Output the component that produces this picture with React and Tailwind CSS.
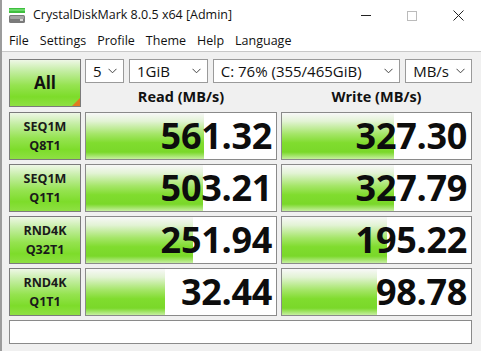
import React from 'react';

const FONT = { fontFamily: '"Open Sans", "Noto Sans", "Liberation Sans", sans-serif' };

const rows = [
  { l1: 'SEQ1M', l2: 'Q8T1', read: '561.32', rw: 118, write: '327.30', ww: 112 },
  { l1: 'SEQ1M', l2: 'Q1T1', read: '503.21', rw: 117, write: '327.79', ww: 112 },
  { l1: 'RND4K', l2: 'Q32T1', read: '251.94', rw: 107, write: '195.22', ww: 105 },
  { l1: 'RND4K', l2: 'Q1T1', read: '32.44', rw: 79, write: '98.78', ww: 95 },
];

const greenBtn =
  'bg-[linear-gradient(to_bottom,#eef7e6_0%,#c2eda0_25%,#95e350_55%,#7ddc2a_80%,#8ee043_100%)] border border-[#7b7b7b]';

const barFill =
  'bg-[linear-gradient(to_bottom,#f8f8f8_0%,#e2f3d4_18%,#a6e66a_45%,#80dc2e_65%,#7ad82a_85%,#c6efa0_100%)]';

const Chevron = () => (
  <svg width="9" height="6" viewBox="0 0 9 6" className="shrink-0">
    <path d="M0.5 0.8 L4.5 4.8 L8.5 0.8" fill="none" stroke="#444" strokeWidth="1" />
  </svg>
);

const Select = ({ value, className }) => (
  <div className={`h-[24px] bg-white border border-[#9a9a9a] flex items-center justify-between pl-[7px] pr-[6px] text-[15px] text-[#111] ${className}`}>
    <span className="leading-none">{value}</span>
    <Chevron />
  </div>
);

const ValueCell = ({ value, fill }) => (
  <div className="relative h-[48px] bg-white border border-[#8a8a8a] overflow-hidden">
    <div className={`absolute left-0 top-0 bottom-0 ${barFill}`} style={{ width: fill }} />
    <div className="relative h-full flex items-center justify-end pr-[4px] text-[36px] font-bold text-[#0d0d0d] tracking-[-0.3px] leading-none">
      {value}
    </div>
  </div>
);

export default function App() {
  return (
    <div className="w-[481px] h-[351px] bg-[#f0f0f0] overflow-hidden border-l-2 border-[#9c9c9c] relative" style={FONT}>
      {/* title bar */}
      <div className="h-[31px] bg-white flex items-center">
        <svg width="17" height="16" viewBox="0 0 17 16" className="ml-[7px] mr-[7px]">
          <rect x="0" y="0" width="16" height="5" fill="#3fbf3f" />
          <rect x="0" y="1" width="16" height="2" fill="#6ad86a" />
          <rect x="0" y="7" width="16" height="8" rx="1.5" fill="#7a7a7a" />
          <rect x="1" y="8" width="14" height="3" rx="1" fill="#a4a4a4" />
          <rect x="11" y="11" width="3" height="2" fill="#d8d8d8" />
        </svg>
        <span className="text-[12.5px] text-[#111]">CrystalDiskMark 8.0.5 x64 [Admin]</span>
        <div className="ml-auto flex items-center h-full">
          <div className="w-[46px] flex justify-center">
            <div className="w-[10px] h-px bg-[#222]" />
          </div>
          <div className="w-[46px] flex justify-center">
            <div className="w-[10px] h-[10px] border border-[#bbb]" />
          </div>
          <div className="w-[46px] flex justify-center">
            <svg width="11" height="11" viewBox="0 0 11 11">
              <path d="M0.5 0.5 L10.5 10.5 M10.5 0.5 L0.5 10.5" stroke="#222" strokeWidth="1" />
            </svg>
          </div>
        </div>
      </div>

      {/* menu bar */}
      <div className="h-[21px] bg-white flex items-center text-[12.5px] text-[#111] border-b border-[#c8c8c8]">
        <span className="ml-[7px]">File</span>
        <span className="ml-[11px]">Settings</span>
        <span className="ml-[11px]">Profile</span>
        <span className="ml-[11px]">Theme</span>
        <span className="ml-[11px]">Help</span>
        <span className="ml-[11px]">Language</span>
      </div>

      <div className="pl-[7px] pt-[7px]">
        <div className="grid grid-cols-[72px_192px_191px] gap-x-[4px] gap-y-[4px]">
          {/* top block */}
          <div className={`relative h-[48px] mb-[1px] ${greenBtn} flex items-center justify-center`}>
            <span className="text-[17px] font-bold text-[#111]">All</span>
            <div className="absolute right-0 bottom-0 w-0 h-0 border-l-[8px] border-l-transparent border-b-[8px] border-b-[#e07b20]" />
          </div>
          <div className="col-span-2 flex flex-col">
            <div className="flex gap-[5px]">
              <Select value="5" className="w-[39px]" />
              <Select value="1GiB" className="w-[79px]" />
              <Select value="C: 76% (355/465GiB)" className="w-[188px]" />
              <Select value="MB/s" className="w-[67px]" />
            </div>
            <div className="flex flex-1 gap-[4px] items-center text-[14.5px] font-bold text-[#111]">
              <div className="w-[192px] text-center pt-[2px]">Read (MB/s)</div>
              <div className="w-[191px] text-center pt-[2px]">Write (MB/s)</div>
            </div>
          </div>

          {rows.map((r, i) => (
            <React.Fragment key={i}>
              <div className={`h-[48px] ${greenBtn} flex flex-col items-center justify-center text-[12.5px] font-bold text-[#1a1a1a] leading-[19px]`}>
                <span>{r.l1}</span>
                <span>{r.l2}</span>
              </div>
              <ValueCell value={r.read} fill={r.rw} />
              <ValueCell value={r.write} fill={r.ww} />
            </React.Fragment>
          ))}
        </div>
        <div className="mt-[4px] w-[463px] h-[24px] bg-white border border-[#8a8a8a]" />
      </div>
    </div>
  );
}
